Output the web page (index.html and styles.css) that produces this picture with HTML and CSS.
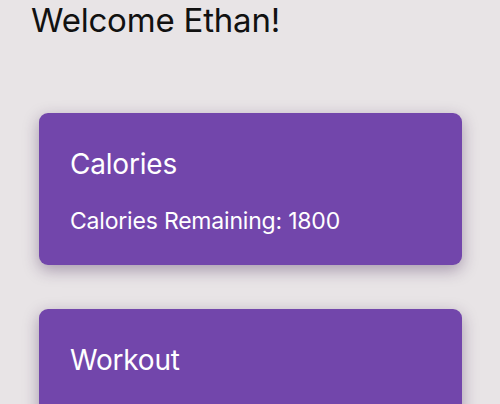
FILE: index.html
```html
<!DOCTYPE html>
<html>
<head>
<meta charset="utf-8">
<link rel="stylesheet" href="styles.css">
</head>
<body>
<div class="page">
  <h1 class="welcome">Welcome Ethan!</h1>
  <div class="cards">
    <div class="card">
      <div class="card-title">Calories</div>
      <div class="card-text">Calories Remaining: 1800</div>
    </div>
    <div class="card">
      <div class="card-title">Workout</div>
    </div>
  </div>
</div>
</body>
</html>
```
FILE: styles.css
```css
html, body {
  margin: 0;
  padding: 0;
  background: #e8e4e6;
  font-family: Inter, "Noto Sans", sans-serif;
}
.page {
  width: 500px;
  height: 404px;
  overflow: hidden;
}
.welcome {
  margin: 0;
  padding: 0 0 0 31px;
  font-size: 33px;
  font-weight: 400;
  line-height: 40px;
  color: #111;
  letter-spacing: -0.2px;
}
.cards {
  display: flex;
  flex-direction: column;
  gap: 44px;
  padding: 73px 38px 0 39px;
}
.card {
  background: #7246ab;
  border-radius: 9px;
  height: 152px;
  flex-shrink: 0;
  box-sizing: border-box;
  padding: 33px 31px 0 31px;
  color: #fff;
  box-shadow: 0 5px 16px rgba(60, 30, 80, 0.38);
}
.card-title {
  font-size: 28px;
  line-height: 36px;
  letter-spacing: -0.2px;
}
.card-text {
  margin-top: 24px;
  font-size: 23px;
  line-height: 30px;
  letter-spacing: -0.2px;
}
```
